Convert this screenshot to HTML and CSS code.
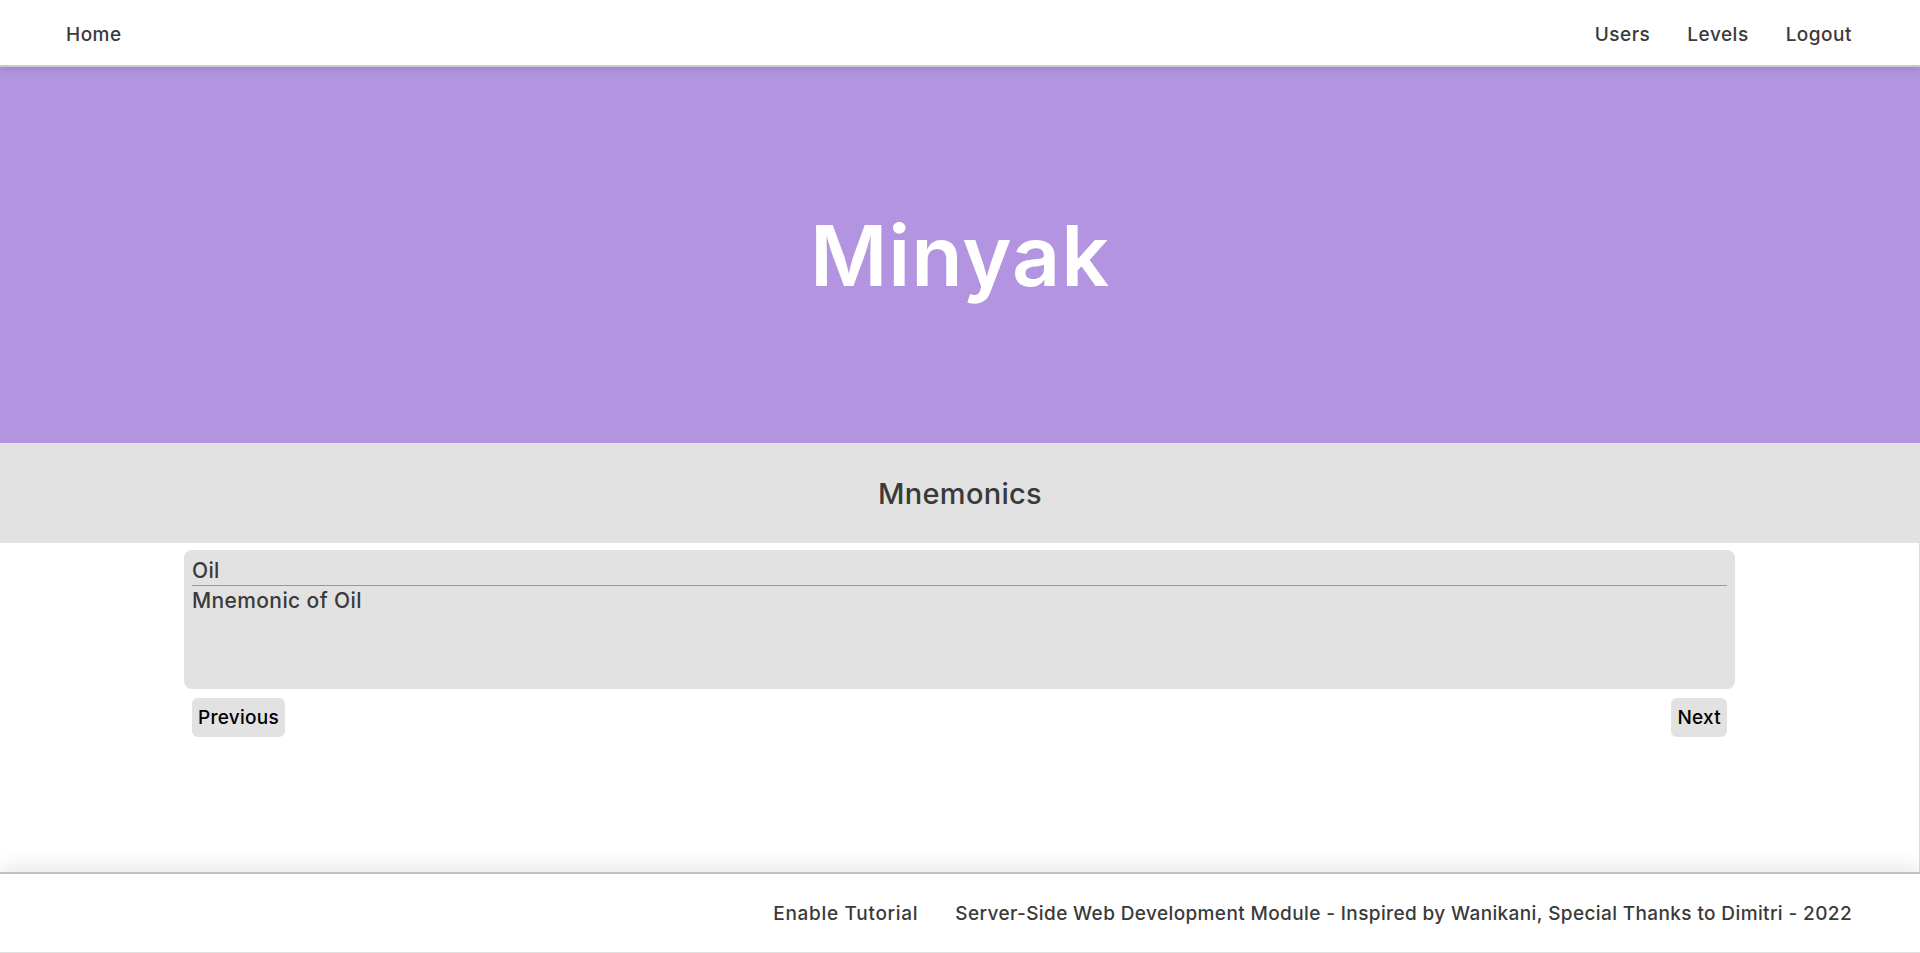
FILE: index.html
```html
<!DOCTYPE html>
<html lang="en">
<head>
<meta charset="utf-8">
<title>Minyak - Mnemonics</title>
<link rel="stylesheet" href="styles.css">
</head>
<body>
<header class="topnav">
  <a class="nav-link" href="#">Home</a>
  <nav class="nav-right">
    <a class="nav-link" href="#">Users</a>
    <a class="nav-link" href="#">Levels</a>
    <a class="nav-link" href="#">Logout</a>
  </nav>
</header>
<section class="hero">
  <h1 class="hero-title">Minyak</h1>
</section>
<section class="subheader">
  <h2 class="subheader-title">Mnemonics</h2>
</section>
<main class="content">
  <div class="card">
    <div class="card-title">Oil</div>
    <div class="card-divider"></div>
    <div class="card-body">Mnemonic of Oil</div>
  </div>
  <div class="pager">
    <button class="pager-btn">Previous</button>
    <button class="pager-btn">Next</button>
  </div>
</main>
<footer class="footer">
  <a class="footer-link" href="#">Enable Tutorial</a>
  <span class="footer-text">Server-Side Web Development Module - Inspired by Wanikani, Special Thanks to Dimitri - 2022</span>
</footer>
</body>
</html>
```

FILE: styles.css
```css
* { box-sizing: border-box; }

html, body {
  height: 100%;
}

body {
  margin: 0;
  min-height: 100vh;
  display: flex;
  flex-direction: column;
  font-family: "Inter", "Roboto", "Liberation Sans", sans-serif;
  font-weight: 500;
  color: #3a3a3a;
  background: #fff;
}

.topnav {
  position: relative;
  z-index: 2;
  height: 67px;
  flex: 0 0 67px;
  display: flex;
  align-items: center;
  justify-content: space-between;
  padding: 4px 68px 0 66px;
  background: #fff;
  border-bottom: 2px solid #c9c9c9;
  box-shadow: 0 2px 8px rgba(0, 0, 0, 0.12);
}

.nav-right {
  display: flex;
  gap: 37px;
}

.nav-link {
  color: #3a3a3a;
  text-decoration: none;
  font-size: 19px;
  letter-spacing: 0.5px;
}

.hero {
  flex: 0 0 376px;
  background: #b294e0;
  display: flex;
  align-items: center;
  justify-content: center;
}

.hero-title {
  margin: 0;
  color: #fff;
  font-size: 84px;
  font-weight: 600;
  letter-spacing: 1px;
}

.subheader {
  flex: 0 0 100px;
  background: #e2e2e2;
  display: flex;
  align-items: center;
  justify-content: center;
}

.subheader-title {
  margin: 0;
  font-size: 29px;
  font-weight: 500;
  letter-spacing: 0.3px;
  color: #3a3a3a;
}

.content {
  flex: 1;
  padding-top: 7px;
  border-right: 1px solid #dcdcdc;
}

.card {
  width: 80%;
  box-sizing: content-box;
  margin: 0 auto;
  padding: 9px 8px 8px;
  height: 122px;
  background: #e2e2e2;
  border-radius: 8px;
}

.card-title,
.card-body {
  font-size: 21px;
  line-height: 24px;
  letter-spacing: 0.4px;
  color: #3a3a3a;
}

.card-divider {
  height: 1px;
  background: #9a9a9a;
  margin: 2px 0 3px;
}

.pager {
  width: 80%;
  margin: 9px auto 0;
  display: flex;
  justify-content: space-between;
}

.pager-btn {
  height: 39px;
  padding: 0 6px;
  border: none;
  border-radius: 6px;
  background: #e2e2e2;
  font-family: "Inter", "Roboto", "Liberation Sans", sans-serif;
  font-size: 19px;
  font-weight: 500;
  letter-spacing: 0.3px;
  color: #000;
}

.footer {
  position: relative;
  z-index: 2;
  flex: 0 0 81px;
  display: flex;
  align-items: center;
  justify-content: flex-end;
  gap: 37px;
  padding: 0 68px 0 0;
  background: #fff;
  border-top: 2px solid #c6bdcc;
  border-bottom: 1px solid #e0e0e0;
  box-shadow: 0 -6px 18px rgba(0, 0, 0, 0.09);
}

.footer-link,
.footer-text {
  font-size: 19px;
  letter-spacing: 0.38px;
  color: #3a3a3a;
  text-decoration: none;
}

.footer-link {
  letter-spacing: 0.7px;
}
```
